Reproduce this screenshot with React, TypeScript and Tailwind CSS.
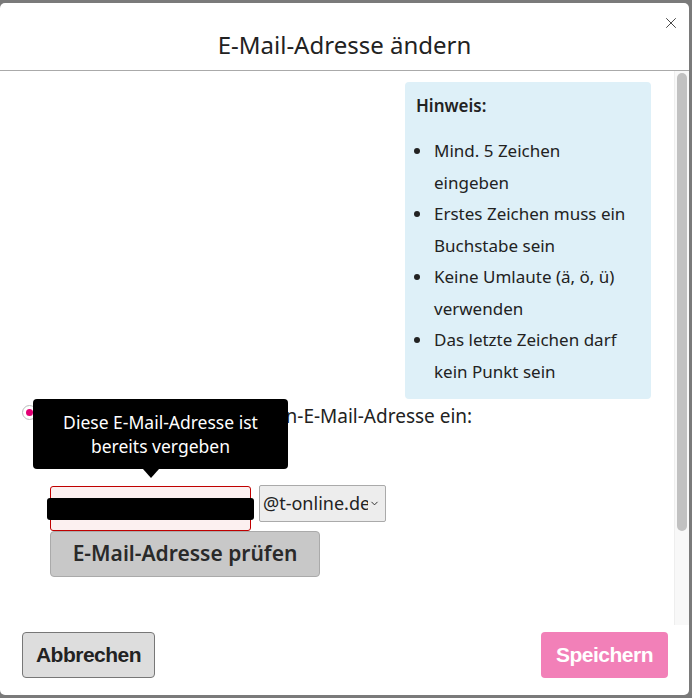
import React from 'react';
import { ChevronDown, X } from 'lucide-react';

const rules = [
  'Mind. 5 Zeichen eingeben',
  'Erstes Zeichen muss ein Buchstabe sein',
  'Keine Umlaute (ä, ö, ü) verwenden',
  'Das letzte Zeichen darf kein Punkt sein',
];

export default function App() {
  return (
    <div className="w-[692px] h-[698px] bg-[#7a7a7a] pt-[3px] overflow-hidden" style={{ fontFamily: '"Noto Sans", sans-serif' }}>
      <div className="w-[689px] h-[692px] bg-white rounded-[5px] flex flex-col text-[#222]">
        {/* Header */}
        <div className="relative h-[68px] shrink-0 border-b border-[#aaa] flex items-center justify-center">
          <h2 className="text-[24px] font-normal tracking-[0px] pt-[16px]">E-Mail-Adresse ändern</h2>
          <button className="absolute right-[9px] top-[11px] text-[#444]">
            <X size={18} strokeWidth={1.3} />
          </button>
        </div>

        {/* Body */}
        <div className="flex flex-1 min-h-0">
          <div className="flex-1 flex flex-col pl-[22px] pr-[23px] pt-[11px]">
            <div className="self-end w-[246px] bg-[#def0f8] rounded-[4px] pl-[11px] pr-[20px] pt-[11px] pb-[12px] text-[17px]">
              <p className="font-semibold leading-[26px]">Hinweis:</p>
              <ul className="mt-[16px] list-disc pl-[17px] leading-[31.5px]">
                {rules.map((r) => (
                  <li key={r} className="pl-[1px]">{r}</li>
                ))}
              </ul>
            </div>

            <label className="mt-[5px] flex items-center gap-[8px] h-[24px] text-[19px] whitespace-nowrap">
              <span className="w-[15px] h-[15px] shrink-0 rounded-full border border-[#bbb] bg-white flex items-center justify-center -mt-[8px]">
                <span className="w-[7px] h-[7px] rounded-full bg-[#e20074]" />
              </span>
              <span>
                <span className="tracking-[0.5px]">Geben Sie Ihre Aliasname</span>n-E-Mail-Adresse ein:
              </span>
            </label>

            <div className="relative ml-[28px] mt-[57px] w-[340px]">
              {/* tooltip */}
              <div className="absolute left-[-17px] top-[-86px] w-[255px] h-[70px] bg-black text-white rounded-[4px] flex items-center justify-center text-center text-[17.5px] leading-[24px]">
                Diese E-Mail-Adresse ist<br />bereits vergeben
                <span className="absolute left-[110px] bottom-[-9px] w-0 h-0 border-l-[8px] border-r-[8px] border-t-[9px] border-l-transparent border-r-transparent border-t-black" />
              </div>

              <div className="flex items-start gap-[8px]">
                <div className="w-[201px] h-[45px] mt-[1px] border border-[#c00000] bg-[#fcf0f0] rounded-[3px] flex items-center">
                  <div className="-mx-[4px] flex-1 h-[22px] bg-black rounded-[3px]" />
                </div>
                <div className="w-[127px] h-[37px] bg-[#ededed] border border-[#aaa] rounded-[2px] flex items-center pl-[3px] pr-[5px] text-[18px]">
                  <span className="flex-1 overflow-hidden whitespace-nowrap">@t-online.de</span>
                  <ChevronDown size={11} strokeWidth={2} className="ml-[1px] shrink-0" />
                </div>
              </div>

              <button className="w-[270px] h-[46px] bg-[#c8c8c8] border border-[#aaa] rounded-[4px] text-[21px] font-semibold text-[#2a2a2a]">
                E-Mail-Adresse prüfen
              </button>
            </div>
          </div>

          {/* scrollbar */}
          <div className="w-[15px] shrink-0 bg-[#f8f8f8] border-l border-[#eee] pt-[2px] px-[2px]">
            <div className="h-[458px] bg-[#c1c1c1] rounded-full" />
          </div>
        </div>

        {/* Footer */}
        <div className="h-[70px] shrink-0 flex items-start justify-between pl-[22px] pr-[21px] pt-[7px]" style={{ fontFamily: '"Liberation Sans", Arial, sans-serif' }}>
          <button className="w-[133px] h-[46px] bg-[#dddddd] border border-[#777] rounded-[4px] text-[21px] font-bold text-[#222] tracking-[-0.5px]">
            Abbrechen
          </button>
          <button className="w-[127px] h-[46px] bg-[#f280b8] rounded-[4px] text-[21px] font-bold text-white tracking-[-0.5px]">
            Speichern
          </button>
        </div>
      </div>
    </div>
  );
}
